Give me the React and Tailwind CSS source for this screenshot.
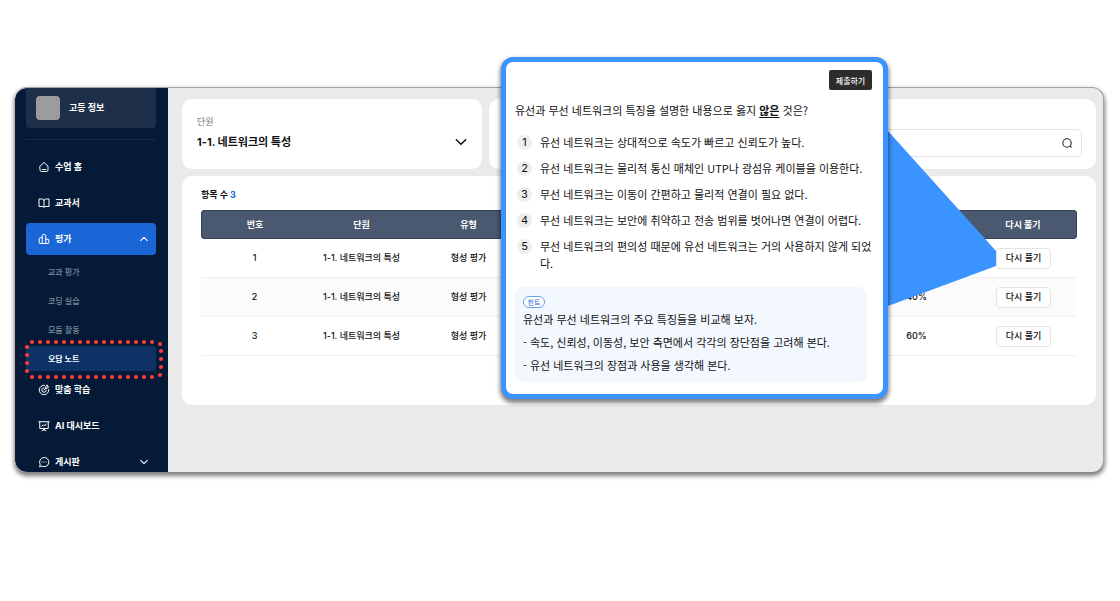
import React from "react";

const iconPaths = {
  home: ["M4 10.5 12 3l8 7.5V18a3 3 0 0 1-3 3H7a3 3 0 0 1-3-3z", "M8.5 17h7"],
  book: ["M12 6c-1-1.500-2.500-2-4.500-2H2v15h6c2 0 3 .5 4 1.500 1-1 2-1.500 4-1.500h6V4h-5.500C14.500 4 13 4.500 12 6z", "M12 6v14"],
  chart: ["M8.500 21V5a2 2 0 0 1 2-2h3a2 2 0 0 1 2 2v16", "M8.500 9.500H4a1.500 1.500 0 0 0-1.500 1.500v8.500A1.500 1.500 0 0 0 4 21h16a1.500 1.500 0 0 0 1.500-1.500V14a1.500 1.500 0 0 0-1.500-1.500h-4.500"],
  target: [
    "M12 7.500a4.500 4.500 0 1 0 4.500 4.500",
    "M13 2.500a9.500 9.500 0 1 0 8.500 8.500",
    "M15.500 5.500v3h3l3-3h-3v-3z",
    "M15.500 8.500l-3.500 3.500",
  ],
  board: ["M2 3.500h20", "M3.500 3.500V17h17V3.500", "M12 17v4", "M8 21.500l4-3 4 3", "M7.500 12.500l3-3 2.500 2.500 3.500-4"],
  chat: ["M3.500 21l.8-4.300A9.300 9.300 0 1 1 8 20.400z", "M8 12h.01", "M12 12h.01", "M16 12h.01"],
};

function NavIcon({ name }) {
  return (
    <svg viewBox="0 0 24 24" className="size-3 shrink-0" fill="none" stroke="currentColor" strokeWidth="2" strokeLinecap="round" strokeLinejoin="round" aria-hidden="true">
      {iconPaths[name].map((d) => (
        <path key={d} d={d} />
      ))}
    </svg>
  );
}

function Chevron({ up, className }) {
  return (
    <svg viewBox="0 0 12 12" className={className} fill="none" stroke="currentColor" strokeWidth="1.3" strokeLinecap="round" strokeLinejoin="round" aria-hidden="true">
      <path d={up ? "M2 8l4-4 4 4" : "M2 4l4 4 4-4"} />
    </svg>
  );
}

function NavItem({ icon, label, active, chevron }) {
  return (
    <a
      href="#"
      className={
        active
          ? "flex h-8 items-center gap-[5px] rounded bg-[#1a66d6] px-3 text-[9px] font-bold text-white"
          : "flex h-8 items-center gap-[5px] rounded px-3 text-[9px] font-bold text-white"
      }
    >
      <NavIcon name={icon} />
      <span>{label}</span>
      {chevron && <Chevron up={chevron === "up"} className="-mr-[5px] ml-auto size-2.5" />}
    </a>
  );
}

const dots = [
  ...Array.from({ length: 16 }, (_, i) => [8 + i * 8, 3]),
  [136, 5],
  [137, 12],
  [137, 20],
  [137, 28],
  [136, 36],
  ...Array.from({ length: 16 }, (_, i) => [8 + i * 8, 38]),
  [3, 8],
  [3, 16],
  [3, 24],
  [3, 32],
];

function DottedOutline() {
  return (
    <svg viewBox="0 0 140 41" className="pointer-events-none absolute -top-[7px] -left-[2px] h-[41px] w-[140px] max-w-none" fill="#ff3b3b" aria-hidden="true">
      {dots.map(([x, y]) => (
        <circle key={`${x}-${y}`} cx={x} cy={y} r="2.100" />
      ))}
    </svg>
  );
}

function Sidebar() {
  return (
    <aside className="w-[153px] shrink-0 rounded-l-xl bg-[#051a37] pr-3 pl-[11px]">
      <div className="flex h-10 items-center gap-[9px] rounded-b bg-[#1e3049] px-[10px] text-white">
        <span className="size-6 rounded bg-[#9c9c9c]" />
        <span className="text-[9px] font-bold">고등 정보</span>
      </div>
      <div className="mt-[11px] border-t border-[#172a46]" />
      <nav className="-mb-[6px] flex flex-col gap-1 pt-[11px]">
        <NavItem icon="home" label="수업 홈" />
        <NavItem icon="book" label="교과서" />
        <NavItem icon="chart" label="평가" active chevron="up" />
        <div className="-mb-px flex flex-col gap-1 text-[8px]">
          {["교과 평가", "코딩 실습", "모둠 활동"].map((t) => (
            <a key={t} href="#" className="flex h-[25px] items-center px-[22px] font-medium text-[#7e8a9b]">
              {t}
            </a>
          ))}
          <a href="#" className="relative flex h-[25px] items-center rounded bg-[#0f3266] px-[22px] font-bold text-white">
            오답 노트
            <DottedOutline />
          </a>
        </div>
        <NavItem icon="target" label="맞춤 학습" />
        <NavItem icon="board" label="AI 대시보드" />
        <NavItem icon="chat" label="게시판" chevron="down" />
      </nav>
    </aside>
  );
}

function Filters() {
  return (
    <div className="grid grid-cols-3 gap-[7px]">
      <div className="relative h-[70px] rounded-[10px] bg-white px-[15px] pt-[17px]">
        <label htmlFor="unit" className="block text-[9px] leading-3 text-[#777]">
          단원
        </label>
        <select id="unit" className="mt-1 block h-5 w-full appearance-none bg-transparent text-[11px] font-bold text-[#111] outline-none">
          <option>1-1. 네트워크의 특성</option>
        </select>
        <Chevron className="pointer-events-none absolute right-[14px] bottom-5 size-3.5 text-[#111]" />
      </div>
      <div className="rounded-[10px] bg-white" />
      <div className="flex items-end rounded-[10px] bg-white px-[14px] pb-3">
        <div className="flex h-7 w-full items-center rounded border border-[#e6e6e6] pr-2">
          <input type="search" aria-label="검색" className="min-w-0 flex-1 bg-transparent px-2 text-[9px] outline-none" />
          <button type="button" aria-label="검색" className="text-[#222]">
            <svg viewBox="0 0 12 12" className="size-3" fill="none" stroke="currentColor" strokeWidth="1.100" strokeLinecap="round" aria-hidden="true">
              <circle cx="6" cy="6" r="4.200" />
              <path d="M9.200 9.200l1 1" />
            </svg>
          </button>
        </div>
      </div>
    </div>
  );
}

const rows = [
  { no: 1, score: "" },
  { no: 2, score: "40%" },
  { no: 3, score: "60%" },
];

function Results() {
  return (
    <section className="mt-[7px] rounded-[10px] bg-white px-[19px] pt-[11px] pb-[49px]">
      <h2 className="text-[9px] leading-4 font-bold text-[#111]">
        항목 수 <span className="text-[#1a66d6]">3</span>
      </h2>
      <table className="mt-[7px] w-full table-fixed border-separate border-spacing-0 text-center text-[9px]">
        <colgroup>
          <col className="w-[107px]" />
          <col className="w-[107px]" />
          <col className="w-[107px]" />
          <col />
          <col className="w-[107px]" />
          <col className="w-[107px]" />
        </colgroup>
        <thead>
          <tr className="h-[29px] bg-[#4a5870] text-white">
            <th className="rounded-l border-y border-l border-[#34445e] p-0 font-bold">번호</th>
            <th className="border-y border-[#34445e] p-0 font-bold">단원</th>
            <th className="border-y border-[#34445e] p-0 font-bold">유형</th>
            <td className="border-y border-[#34445e] p-0" />
            <td className="border-y border-[#34445e] p-0" />
            <th className="rounded-r border-y border-r border-[#34445e] p-0 font-bold">다시 풀기</th>
          </tr>
        </thead>
        <tbody className="font-medium text-[#111]">
          {rows.map((r) => (
            <tr key={r.no} className="h-[39px] even:bg-[#fbfbfb]">
              <td className="border-b border-[#f1f1f1] p-0">{r.no}</td>
              <td className="border-b border-[#f1f1f1] p-0">1-1. 네트워크의 특성</td>
              <td className="border-b border-[#f1f1f1] p-0">형성 평가</td>
              <td className="border-b border-[#f1f1f1] p-0" />
              <td className="border-b border-[#f1f1f1] p-0">{r.score}</td>
              <td className="border-b border-[#f1f1f1] p-0">
                <button type="button" className="h-[21px] rounded border border-[#e4e4e4] bg-white px-[9px] font-medium whitespace-nowrap">
                  다시 풀기
                </button>
              </td>
            </tr>
          ))}
        </tbody>
      </table>
    </section>
  );
}

const choices = [
  "유선 네트워크는 상대적으로 속도가 빠르고 신뢰도가 높다.",
  "유선 네트워크는 물리적 통신 매체인 UTP나 광섬유 케이블을 이용한다.",
  "무선 네트워크는 이동이 간편하고 물리적 연결이 필요 없다.",
  "무선 네트워크는 보안에 취약하고 전송 범위를 벗어나면 연결이 어렵다.",
  "무선 네트워크의 편의성 때문에 유선 네트워크는 거의 사용하지 않게 되었다.",
];

function QuestionCallout() {
  return (
    <div className="absolute -top-[30px] right-[216px] w-[387px] font-['Noto_Sans_CJK_KR',sans-serif]">
      <svg viewBox="0 0 108 175" className="absolute top-[74px] left-full h-[175px] w-[108px] max-w-none" fill="#3b93ff" aria-hidden="true">
        <path d="M0 0 108 120V135L0 175z" />
      </svg>
      <div className="relative rounded-xl border-5 border-[#3b93ff] bg-white pt-2 pr-[11px] pb-3 pl-[9px] text-[11px] leading-[17px] text-[#111] shadow-[0_3px_4px_1px_rgba(0,0,0,0.5)]">
        <button type="button" className="ml-auto block h-5 w-[43px] rounded-[2px] bg-[#2c2c2c] text-[8px] font-medium text-white">
          제출하기
        </button>
        <p className="mt-3">
          유선과 무선 네트워크의 특징을 설명한 내용으로 옳지 <strong className="underline underline-offset-2">않은</strong> 것은?
        </p>
        <fieldset className="mt-[15px] flex flex-col gap-[9px] pl-[2px]">
          {choices.map((text, i) => (
            <label key={text} className="relative flex items-start gap-2 break-all">
              <input type="radio" name="answer" className="sr-only" />
              <span className="mt-px flex size-[15px] shrink-0 items-center justify-center rounded-full bg-[#eee] font-['Inter',sans-serif]">{i + 1}</span>
              <span className="-mr-[10px] flex-1">{text}</span>
            </label>
          ))}
        </fieldset>
        <div className="mt-[15px] mr-[5px] rounded-lg bg-[#f3f8ff] px-2 pt-[9px] pb-[5px]">
          <span className="flex h-3 w-[22px] items-center justify-center rounded-full border border-[#6a9ee8] bg-white text-[7px] text-[#1a66d6]">힌트</span>
          <p className="leading-[23px]">유선과 무선 네트워크의 주요 특징들을 비교해 보자.</p>
          <p className="leading-[23px]">- 속도, 신뢰성, 이동성, 보안 측면에서 각각의 장단점을 고려해 본다.</p>
          <p className="leading-[23px]">- 유선 네트워크의 장점과 사용을 생각해 본다.</p>
        </div>
      </div>
    </div>
  );
}

export default function App() {
  return (
    <div lang="ko" className="min-h-screen bg-white pt-[87px] pr-4 pb-32 pl-[15px] font-['Inter','Noto_Sans_CJK_KR',sans-serif]">
      <div className="relative">
        <div className="flex overflow-hidden rounded-xl border-t border-r border-[#a3a3a3] bg-[#eaeaea] shadow-[0_3px_4px_1px_rgba(0,0,0,0.5)]">
          <Sidebar />
          <main className="min-w-0 flex-1 pt-[11px] pr-[7px] pl-[14px]">
            <Filters />
            <Results />
          </main>
        </div>
        <QuestionCallout />
      </div>
    </div>
  );
}
